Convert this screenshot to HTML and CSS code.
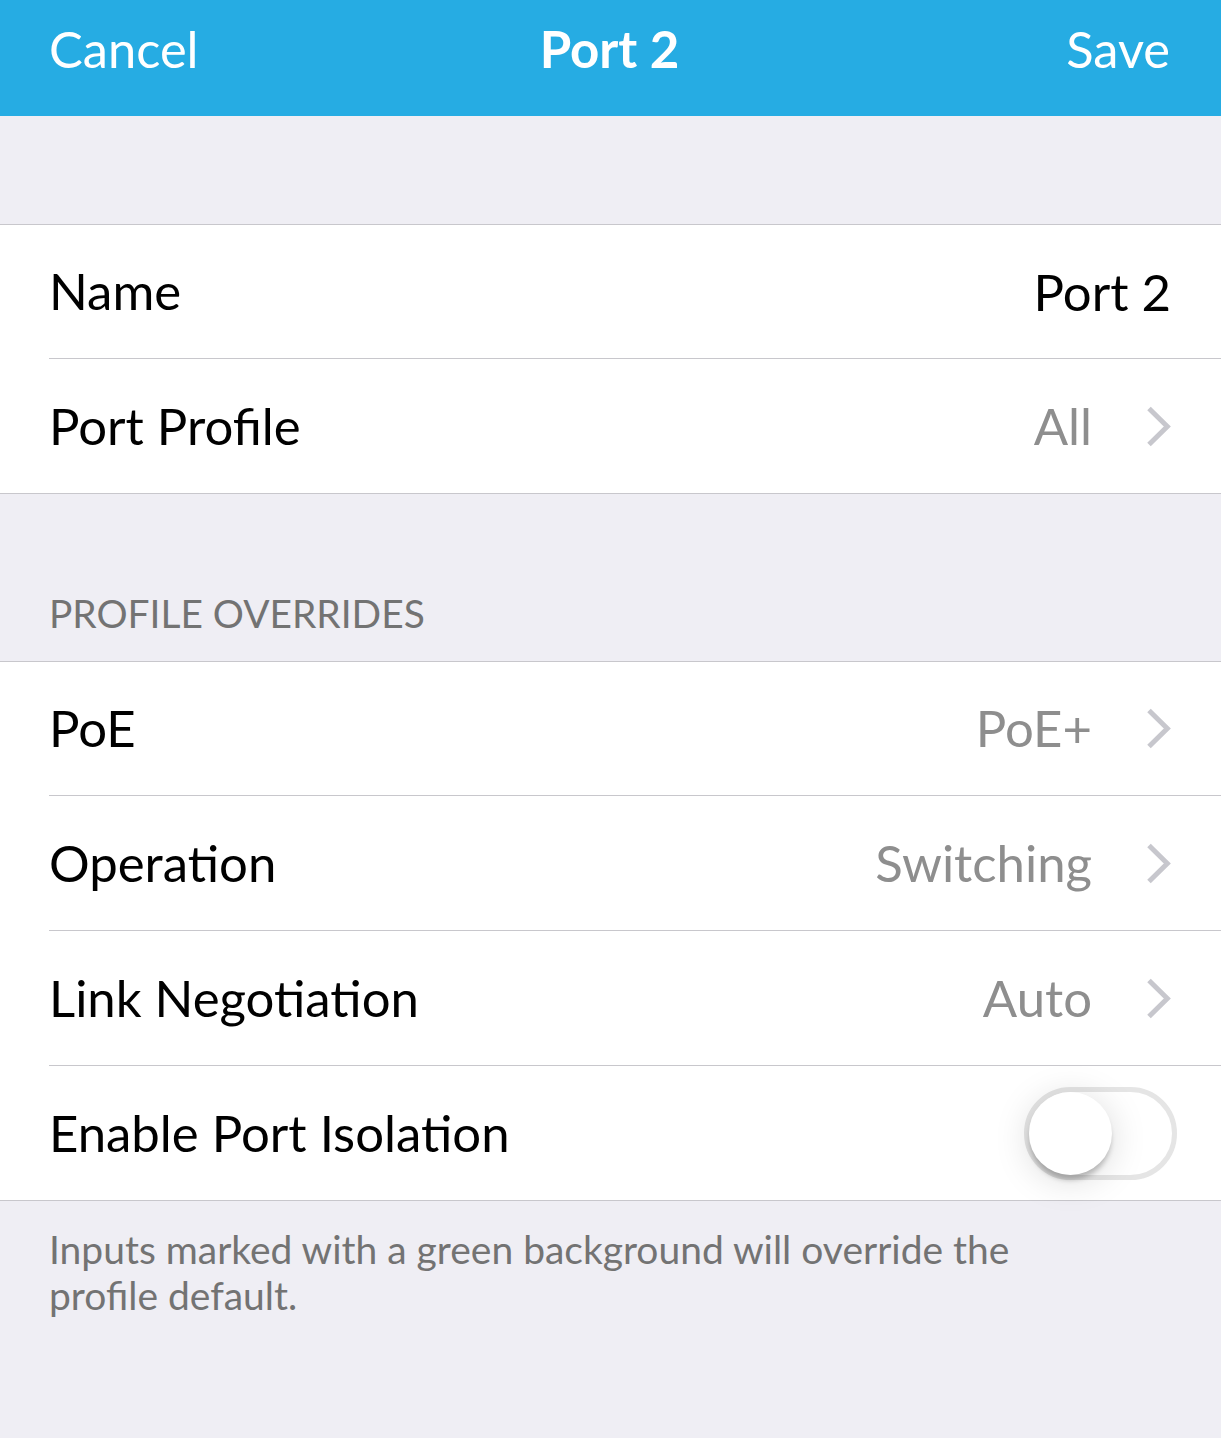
FILE: index.html
```html
<!DOCTYPE html>
<html lang="en">
<head>
	<meta charset="utf-8">
	<title>Port 2</title>
	<link rel="stylesheet" href="styles.css">
</head>
<body>
	<header class="navbar">
		<span class="nav-item">Cancel</span>
		<h1 class="nav-title">Port 2</h1>
		<span class="nav-item right">Save</span>
	</header>

	<section class="group first">
		<div class="row">
			<span class="label">Name</span>
			<span class="input">Port 2</span>
		</div>
		<div class="row">
			<span class="label">Port Profile</span>
			<span class="value">All</span>
			<svg class="arrow" viewBox="0 0 24 40"><path d="M2 2.5 L20.3 20.5 L2 38.5"/></svg>
		</div>
	</section>

	<h2 class="group-title">PROFILE OVERRIDES</h2>
	<section class="group overrides">
		<div class="row">
			<span class="label">PoE</span>
			<span class="value">PoE+</span>
			<svg class="arrow" viewBox="0 0 24 40"><path d="M2 2.5 L20.3 20.5 L2 38.5"/></svg>
		</div>
		<div class="row">
			<span class="label">Operation</span>
			<span class="value">Switching</span>
			<svg class="arrow" viewBox="0 0 24 40"><path d="M2 2.5 L20.3 20.5 L2 38.5"/></svg>
		</div>
		<div class="row">
			<span class="label">Link Negotiation</span>
			<span class="value">Auto</span>
			<svg class="arrow" viewBox="0 0 24 40"><path d="M2 2.5 L20.3 20.5 L2 38.5"/></svg>
		</div>
		<div class="row">
			<span class="label">Enable Port Isolation</span>
			<span class="toggle"><span class="knob"></span></span>
		</div>
	</section>
	<p class="note">Inputs marked with a green background will override the<br>profile default.</p>
</body>
</html>
```

FILE: styles.css
```css
* {
	box-sizing: border-box;
}
body {
	margin: 0;
	background-color: #EFEEF4;
	color: #000000;
	font-family: Lato, sans-serif;
	font-size: 50.9px;
	line-height: 60px;
}
.navbar {
	display: grid;
	grid-template-columns: 1fr auto 1fr;
	height: 116px;
	padding: 19px 51px 0 49px;
	background-color: #26ACE3;
	color: #FFFFFF;
}
.nav-item {
	font-size: 50.6px;
}
.nav-title {
	margin: 0;
	font-size: 51px;
	font-weight: bold;
}
.right {
	text-align: right;
}
.group {
	background-color: #FFFFFF;
	border-top: 1px solid #C8C7CC;
	border-bottom: 1px solid #C8C7CC;
}
.first {
	margin-top: 108px;
}
.row {
	display: flex;
	align-items: center;
	height: 135px;
	margin-left: 49px;
	padding-right: 50px;
	border-bottom: 1px solid #C8C7CC;
}
.row:first-child,
.row:last-child {
	height: 134px;
}
.row:last-child {
	border-bottom: none;
}
.overrides .row:first-child {
	padding-bottom: 1px;
}
.label {
	flex: 1;
}
.first .row:first-child .label {
	padding-bottom: 1px;
}
.value {
	color: #8E8E8E;
}
.arrow {
	width: 24px;
	height: 40px;
	margin-left: 55px;
	overflow: visible;
	fill: none;
	stroke: #C7C7CD;
	stroke-width: 5;
}
.group-title {
	height: 167px;
	margin: 0;
	padding: 89px 49px 0;
	color: #737373;
	font-size: 38.9px;
	font-weight: normal;
}
.toggle {
	width: 153px;
	height: 93px;
	margin-right: -6px;
	border: 5px solid #E5E5E5;
	border-radius: 47px;
}
.knob {
	display: block;
	width: 83px;
	height: 83px;
	border-radius: 50%;
	background-color: #FFFFFF;
	box-shadow: 0 6px 5px -1px rgba(0, 0, 0, 0.22), 0 5px 36px rgba(0, 0, 0, 0.15);
}
.note {
	margin: 0;
	padding: 25px 49px;
	color: #737373;
	font-size: 38.97px;
	line-height: 46px;
}
```
